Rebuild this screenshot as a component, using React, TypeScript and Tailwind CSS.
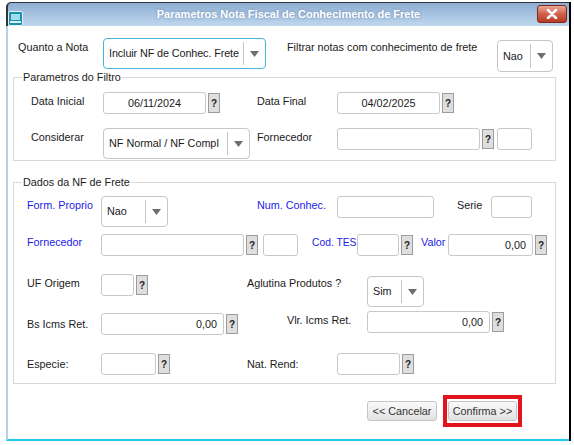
function Arrow() {
  return (
    <svg width="9" height="6" viewBox="0 0 9 6">
      <polygon points="0,0 9,0 4.5,6" fill="#6e6e6e" />
    </svg>
  );
}

function Select({ value, className, focused }: { value: string; className: string; focused?: boolean }) {
  return (
    <div
      className={`flex items-center bg-white border rounded-[4px] ${focused ? "border-[#48b4dc]" : "border-[#c6c6c6]"} ${className}`}
    >
      <span className="flex-1 pl-[5px] whitespace-nowrap">{value}</span>
      <div className="self-stretch my-[3px] w-px bg-[#c6c6c6]" />
      <div className="w-[21px] flex justify-center">
        <Arrow />
      </div>
    </div>
  );
}

function Input({ className, value, align }: { className: string; value?: string; align?: string }) {
  return (
    <div
      className={`h-[22px] flex items-center bg-white border border-[#c8c8c8] rounded-[3px] px-[6px] ${
        align === "right" ? "justify-end" : "justify-center"
      } ${className}`}
    >
      {value}
    </div>
  );
}

function Help({ className }: { className?: string }) {
  return (
    <div
      className={`ml-[2px] w-[12px] h-[20px] flex items-center justify-center bg-[#dedede] border border-[#9c9c9c] text-[10px] font-bold text-[#222] ${className ?? ""}`}
    >
      ?
    </div>
  );
}

export default function App() {
  const label = "whitespace-nowrap leading-[13px]";
  const blue = "text-[#1c1ce8]";

  return (
    <div className="w-[574px] h-[445px] bg-white pt-[2px] pl-[6px] font-['Liberation_Sans',Arial,sans-serif] text-[10.8px] text-[#1a1a1a]">
      <div className="w-[565px] h-[439px] flex flex-col border-r-2 border-r-black">
        {/* barra de titulo */}
        <div className="h-[24px] grid grid-cols-[40px_1fr_40px] items-start border-t border-l-2 border-[#333] rounded-tl-[5px] bg-gradient-to-b from-[#8eaed3] to-[#c0d8ee]">
          <svg width="15" height="15" viewBox="0 0 15 15" className="mt-[8px]">
            <rect x="0.5" y="0.5" width="14" height="14" rx="1.5" fill="#1a8fae" stroke="#dff2f8" />
            <rect x="3" y="3" width="9" height="6" fill="#9fdcec" />
            <rect x="2" y="10" width="11" height="2" fill="#d8f0f6" />
          </svg>
          <div className="h-full flex items-center justify-center text-[11px] font-bold text-white whitespace-nowrap [text-shadow:0_0_3px_rgba(60,90,130,0.5)]">
            Parametros Nota Fiscal de Conhecimento de Frete
          </div>
          <div className="flex justify-end pr-[2px]">
            <div className="mt-[2px] w-[30px] h-[18px] flex items-center justify-center rounded-[3px] border border-[#7c2a1e] bg-gradient-to-b from-[#e8a898] via-[#d0604a] to-[#b83a26]">
              <svg width="12" height="10" viewBox="0 0 12 10">
                <path d="M2 1 L10 9 M10 1 L2 9" stroke="#fff" strokeWidth="2.6" strokeLinecap="round" />
              </svg>
            </div>
          </div>
        </div>

        {/* corpo */}
        <div className="flex-1 flex flex-col border-l-2 border-l-[#b4d2f0] border-b-2 border-b-[#1ec8e8]">
          <div className="flex items-start pt-[12px]">
            <span className={`ml-[10px] w-[85px] mt-[3px] ${label}`}>Quanto a Nota</span>
            <Select value="Incluir NF de Conhec. Frete" className="w-[163px] h-[31px] tracking-[-0.1px]" focused />
            <span className={`ml-[21px] w-[210px] mt-[3px] ${label}`}>Filtrar notas com conhecimento de frete</span>
            <Select value="Nao" className="w-[56px] h-[32px] mt-[2px]" />
          </div>

          <fieldset className="ml-[5px] mt-[-1px] w-[543px] border border-[#d8d8d8]">
            <legend className="ml-[8px] px-[1px] leading-[12px] text-[#222]">Parametros do Filtro</legend>
            <div className="pl-[17px] pt-[9px] pb-[1px]">
              <div className="flex items-start">
                <span className={`w-[72px] mt-[3px] ${label}`}>Data Inicial</span>
                <Input className="w-[103px]" value="06/11/2024" />
                <Help className="mt-[1px]" />
                <span className={`ml-[37px] w-[80px] mt-[3px] ${label}`}>Data Final</span>
                <Input className="w-[103px]" value="04/02/2025" />
                <Help className="mt-[1px]" />
              </div>
              <div className="flex items-start mt-[14px]">
                <span className={`w-[72px] mt-[3px] ${label}`}>Considerar</span>
                <Select value="NF Normal / NF Compl" className="w-[147px] h-[31px]" />
                <span className={`ml-[7px] w-[80px] mt-[3px] ${label}`}>Fornecedor</span>
                <Input className="w-[143px]" />
                <Help className="mt-[1px]" />
                <Input className="ml-[3px] w-[35px]" />
              </div>
            </div>
          </fieldset>

          <fieldset className="ml-[5px] mt-[15px] w-[543px] border border-[#d8d8d8]">
            <legend className="ml-[8px] px-[1px] leading-[12px] text-[#222]">Dados da NF de Frete</legend>
            <div className="pl-[13px] pt-[8px] pb-[8px]">
              <div className="flex items-start">
                <span className={`w-[74px] mt-[3px] ${label} ${blue}`}>Form. Proprio</span>
                <Select value="Nao" className="w-[67px] h-[31px]" />
                <span className={`ml-[89px] w-[80px] mt-[3px] ${label} ${blue}`}>Num. Conhec.</span>
                <Input className="w-[97px]" />
                <span className={`ml-[23px] w-[34px] mt-[3px] ${label}`}>Serie</span>
                <Input className="w-[41px]" />
              </div>

              <div className="flex items-start mt-[7px]">
                <span className={`w-[74px] mt-[2px] ${label} ${blue}`}>Fornecedor</span>
                <Input className="w-[143px]" />
                <Help className="mt-[1px]" />
                <Input className="ml-[5px] w-[35px]" />
                <span className={`ml-[14px] w-[45px] mt-[2px] text-[10.3px] ${label} ${blue}`}>Cod. TES</span>
                <Input className="w-[42px]" />
                <Help className="mt-[1px]" />
                <span className={`ml-[8px] w-[27px] mt-[2px] ${label} ${blue}`}>Valor</span>
                <Input className="w-[85px]" value="0,00" align="right" />
                <Help className="mt-[1px]" />
              </div>

              <div className="flex items-start mt-[18px]">
                <span className={`w-[74px] mt-[3px] ${label}`}>UF Origem</span>
                <Input className="w-[33px]" />
                <Help className="mt-[1px]" />
                <span className={`ml-[99px] w-[120px] mt-[3px] ${label}`}>Aglutina Produtos ?</span>
                <Select value="Sim" className="w-[57px] h-[31px] mt-[2px]" />
              </div>

              <div className="flex items-start mt-[4px]">
                <span className={`w-[74px] mt-[7px] ${label}`}>Bs Icms Ret.</span>
                <Input className="w-[123px] mt-[2px]" value="0,00" align="right" />
                <Help className="mt-[3px]" />
                <span className={`ml-[49px] w-[80px] mt-[3px] ${label}`}>Vlr. Icms Ret.</span>
                <Input className="w-[123px]" value="0,00" align="right" />
                <Help className="mt-[1px]" />
              </div>

              <div className="flex items-start mt-[18px]">
                <span className={`w-[74px] mt-[5px] ${label}`}>Especie:</span>
                <Input className="w-[55px]" />
                <Help className="mt-[1px]" />
                <span className={`ml-[77px] w-[90px] mt-[5px] ${label}`}>Nat. Rend:</span>
                <Input className="w-[63px]" />
                <Help className="mt-[1px]" />
              </div>
            </div>
          </fieldset>

          <div className="flex items-start mt-[11px]">
            <button className="ml-[359px] mt-[6px] w-[70px] h-[20px] border border-[#c4c4c4] rounded-[3px] bg-gradient-to-b from-[#fafafa] to-[#e2e2e2] text-[#333] leading-none">
              &lt;&lt; Cancelar
            </button>
            <div className="ml-[6px] w-[79px] h-[32px] border-4 border-[#e3141c] pt-[2px] pl-[1px]">
              <button className="w-[69px] h-[20px] border border-[#c4c4c4] rounded-[3px] bg-gradient-to-b from-[#fafafa] to-[#e2e2e2] text-[#333] leading-none">
                Confirma &gt;&gt;
              </button>
            </div>
          </div>
        </div>
      </div>
    </div>
  );
}
